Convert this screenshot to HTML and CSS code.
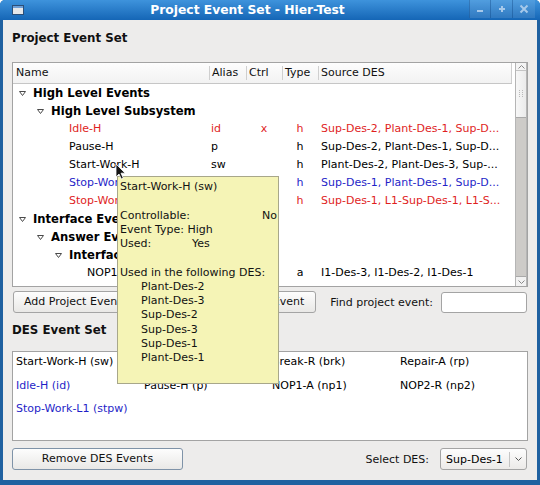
FILE: index.html
```html
<!DOCTYPE html>
<html>
<head>
<meta charset="utf-8">
<title>Project Event Set - Hier-Test</title>
<link rel="stylesheet" href="styles.css">
</head>
<body>
<div class="window">
  <div class="titlebar">
    <div class="tb-icon">
      <svg width="12" height="10" viewBox="0 0 12 10"><rect x="0.5" y="0.5" width="11" height="9" fill="#e6e7e9" stroke="#2c4f78"/><rect x="1" y="1" width="10" height="2" fill="#6f9fd6"/></svg>
    </div>
    <div class="tb-title">Project Event Set - Hier-Test</div>
    <div class="tb-buttons">
      <div class="tb-btn w20"><svg width="8" height="8" viewBox="0 0 8 8"><rect x="1" y="5" width="6" height="2" fill="#a7c9ea"/></svg></div>
      <div class="tb-btn w21"><svg width="8" height="8" viewBox="0 0 8 8"><path d="M3 1h2v2h2v2H5v2H3V5H1V3h2z" fill="#a7c9ea"/></svg></div>
      <div class="tb-btn w23"><svg width="10" height="10" viewBox="0 0 10 10"><path d="M1.5 1.5L8.5 8.5M8.5 1.5L1.5 8.5" stroke="#a7c9ea" stroke-width="2"/></svg></div>
    </div>
  </div>

  <div class="content">
    <div class="section-title">Project Event Set</div>

    <div class="tree-box">
      <div class="tree">
        <div class="tree-header">
          <div class="hcol">Name</div>
          <div class="hcol sep">Alias</div>
          <div class="hcol sep">Ctrl</div>
          <div class="hcol sep">Type</div>
          <div class="hcol sep last">Source DES</div>
        </div>

        <div class="row">
          <div class="name l0"><span class="exp"><svg width="7" height="5" viewBox="0 0 7 5"><path d="M0.5 0.5H6.5L3.5 4.5Z" fill="#fff" stroke="#4a4a4a"/></svg></span><span class="grp">High Level Events</span></div>
        </div>
        <div class="row">
          <div class="name l1"><span class="exp"><svg width="7" height="5" viewBox="0 0 7 5"><path d="M0.5 0.5H6.5L3.5 4.5Z" fill="#fff" stroke="#4a4a4a"/></svg></span><span class="grp">High Level Subsystem</span></div>
        </div>
        <div class="row red">
          <div class="name l2"><span class="exp"></span>Idle-H</div>
          <div class="alias">id</div>
          <div class="ctrl">x</div>
          <div class="type">h</div>
          <div class="src">Sup-Des-2, Plant-Des-1, Sup-D...</div>
        </div>
        <div class="row">
          <div class="name l2"><span class="exp"></span>Pause-H</div>
          <div class="alias">p</div>
          <div class="ctrl"></div>
          <div class="type">h</div>
          <div class="src">Sup-Des-2, Plant-Des-1, Sup-D...</div>
        </div>
        <div class="row">
          <div class="name l2"><span class="exp"></span>Start-Work-H</div>
          <div class="alias">sw</div>
          <div class="ctrl"></div>
          <div class="type">h</div>
          <div class="src">Plant-Des-2, Plant-Des-3, Sup-...</div>
        </div>
        <div class="row blue">
          <div class="name l2"><span class="exp"></span>Stop-Work-H</div>
          <div class="alias"></div>
          <div class="ctrl"></div>
          <div class="type">h</div>
          <div class="src">Sup-Des-1, Plant-Des-1, Sup-D...</div>
        </div>
        <div class="row red">
          <div class="name l2"><span class="exp"></span>Stop-Work-L1</div>
          <div class="alias"></div>
          <div class="ctrl"></div>
          <div class="type">h</div>
          <div class="src">Sup-Des-1, L1-Sup-Des-1, L1-S...</div>
        </div>
        <div class="row">
          <div class="name l0"><span class="exp"><svg width="7" height="5" viewBox="0 0 7 5"><path d="M0.5 0.5H6.5L3.5 4.5Z" fill="#fff" stroke="#4a4a4a"/></svg></span><span class="grp">Interface Events</span></div>
        </div>
        <div class="row">
          <div class="name l1"><span class="exp"><svg width="7" height="5" viewBox="0 0 7 5"><path d="M0.5 0.5H6.5L3.5 4.5Z" fill="#fff" stroke="#4a4a4a"/></svg></span><span class="grp">Answer Events</span></div>
        </div>
        <div class="row">
          <div class="name l2"><span class="exp"><svg width="7" height="5" viewBox="0 0 7 5"><path d="M0.5 0.5H6.5L3.5 4.5Z" fill="#fff" stroke="#4a4a4a"/></svg></span><span class="grp">Interface-1</span></div>
        </div>
        <div class="row">
          <div class="name l3"><span class="exp"></span>NOP1-A</div>
          <div class="alias"></div>
          <div class="ctrl"></div>
          <div class="type">a</div>
          <div class="src">I1-Des-3, I1-Des-2, I1-Des-1</div>
        </div>
      </div>
      <div class="tree-gap"></div>
      <div class="vscroll">
        <div class="sb-up"><svg width="7" height="4" viewBox="0 0 7 4"><path d="M0.5 3.5L3.5 0.5L6.5 3.5" fill="none" stroke="#8a8a8a"/></svg></div>
        <div class="sb-thumb"><svg width="5" height="8" viewBox="0 0 5 8"><g fill="#b9b9b9"><rect x="0" y="0" width="1" height="1"/><rect x="3" y="0" width="1" height="1"/><rect x="0" y="2" width="1" height="1"/><rect x="3" y="2" width="1" height="1"/><rect x="0" y="4" width="1" height="1"/><rect x="3" y="4" width="1" height="1"/><rect x="0" y="6" width="1" height="1"/><rect x="3" y="6" width="1" height="1"/></g></svg></div>
        <div class="sb-track"></div>
        <div class="sb-down"><svg width="7" height="4" viewBox="0 0 7 4"><path d="M0.5 0.5L3.5 3.5L6.5 0.5" fill="none" stroke="#8a8a8a"/></svg></div>
      </div>
    </div>

    <div class="btn-row">
      <div class="btn btn-add">Add Project Events</div>
      <div class="btn btn-rem">Remove Project Event</div>
      <div class="find-label">Find project event:</div>
      <div class="find-input"></div>
    </div>

    <div class="section-title second">DES Event Set</div>

    <div class="des-box">
      <div class="des-item">Start-Work-H (sw)</div>
      <div class="des-item"></div>
      <div class="des-item">Break-R (brk)</div>
      <div class="des-item">Repair-A (rp)</div>
      <div class="des-item blue">Idle-H (id)</div>
      <div class="des-item">Pause-H (p)</div>
      <div class="des-item">NOP1-A (np1)</div>
      <div class="des-item">NOP2-R (np2)</div>
      <div class="des-item blue">Stop-Work-L1 (stpw)</div>
    </div>

    <div class="bottom-row">
      <div class="btn btn-remdes">Remove DES Events</div>
      <div class="sel-label">Select DES:</div>
      <div class="combo">
        <span class="combo-text">Sup-Des-1</span>
        <span class="combo-sep"></span>
        <span class="combo-arrow"><svg width="7" height="4" viewBox="0 0 7 4"><path d="M0.5 0.5L3.5 3.5L6.5 0.5" fill="none" stroke="#555"/></svg></span>
      </div>
    </div>
  </div>

  <div class="tooltip">
    <div class="tt-line">Start-Work-H (sw)</div>
    <div class="tt-line"></div>
    <div class="tt-line"><span class="tt-k1">Controllable:</span>No</div>
    <div class="tt-line">Event Type: High</div>
    <div class="tt-line"><span class="tt-k2">Used:</span>Yes</div>
    <div class="tt-line"></div>
    <div class="tt-line">Used in the following DES:</div>
    <div class="tt-line tt-li">Plant-Des-2</div>
    <div class="tt-line tt-li">Plant-Des-3</div>
    <div class="tt-line tt-li">Sup-Des-2</div>
    <div class="tt-line tt-li">Sup-Des-3</div>
    <div class="tt-line tt-li">Sup-Des-1</div>
    <div class="tt-line tt-li">Plant-Des-1</div>
    <div class="tt-line"></div>
  </div>

  <svg class="cursor" width="12" height="17" viewBox="0 0 12 17"><path d="M1 1V14L4 11L6.3 16L8.3 15.1L6 10.2H10.2Z" fill="#151515" stroke="#ffffff" stroke-width="0.8" stroke-linejoin="round"/></svg>
</div>
</body>
</html>
```

FILE: styles.css
```css
* { box-sizing: border-box; }
html, body { margin: 0; padding: 0; }
body {
  width: 540px;
  height: 485px;
  overflow: hidden;
  background: #ffffff;
  font-family: "DejaVu Sans", "Noto Sans", sans-serif;
  font-size: 11px;
  color: #000;
}
.window {
  position: relative;
  width: 540px;
  height: 485px;
  display: flex;
  flex-direction: column;
  background: #1f61a0;
  border-radius: 5px 5px 0 0;
  overflow: hidden;
}

/* title bar */
.titlebar {
  height: 20px;
  flex: none;
  display: flex;
  align-items: center;
  background: linear-gradient(#3e93dc, #1566b6);
  color: #fff;
}
.tb-icon { width: 12px; height: 10px; margin-left: 12px; display: flex; }
.tb-title {
  flex: 1;
  text-align: center;
  font-weight: bold;
  font-size: 12.3px;
  line-height: 20px;
  padding-left: 2px;
}
.tb-buttons { display: flex; height: 18px; align-self: flex-start; margin-right: 5px; }
.tb-btn {
  height: 18px;
  display: flex;
  align-items: center;
  justify-content: center;
  background: rgba(255,255,255,0.10);
  border-left: 1px solid rgba(10,60,120,0.35);
}
.w20 { width: 21px; }
.w21 { width: 22px; }
.w23 { width: 23px; }

/* content */
.content {
  flex: 1;
  margin: 0 3px 5px 3px;
  background: #edeceb;
  padding: 10px 9px 0 9px;
  display: flex;
  flex-direction: column;
}
.section-title {
  height: 16px;
  line-height: 16px;
  font-weight: bold;
  font-size: 11.8px;
  color: #111;
}
.section-title.second { margin-top: 9px; }

/* tree */
.tree-box {
  margin-top: 16px;
  height: 225px;
  border: 1px solid #a3a3a3;
  background: #fff;
  display: flex;
}
.tree { width: 499px; flex: none; }
.tree-gap { width: 3px; flex: none; }
.tree-header, .row {
  display: grid;
  grid-template-columns: 196px 37px 36px 36px 194px;
}
.tree-header {
  height: 21px;
  background: linear-gradient(#fdfdfd, #f2f2f2);
  border-bottom: 1px solid #c6c6c6;
}
.hcol {
  position: relative;
  line-height: 20px;
  padding-left: 3px;
  color: #111;
}
.hcol.sep::before {
  content: "";
  position: absolute;
  left: 0;
  top: 3px;
  bottom: 3px;
  width: 1px;
  background: #cfcfcf;
}
.hcol.last::after {
  content: "";
  position: absolute;
  right: 0;
  top: 0;
  bottom: 0;
  width: 1px;
  background: #cfcfcf;
}
.row { height: 18px; line-height: 18px; white-space: nowrap; }
.name { display: flex; align-items: center; }
.l0 { padding-left: 6px; }
.l1 { padding-left: 24px; }
.l2 { padding-left: 42px; }
.l3 { padding-left: 60px; }
.exp { width: 7px; height: 5px; margin-right: 7px; display: flex; flex: none; }
.grp { font-weight: bold; font-size: 11.6px; }
.alias { padding-left: 2px; }
.ctrl, .type { text-align: center; }
.src { padding-left: 3px; }
.red { color: #e01e1e; }
.blue { color: #1f1fc8; }

/* scrollbar */
.vscroll {
  width: 12px;
  flex: none;
  display: flex;
  flex-direction: column;
  background: #cdcbc8;
  border-left: 1px solid #b5b5b5;
  border-right: 1px solid #b5b5b5;
}
.sb-up {
  height: 8px;
  display: flex;
  align-items: center;
  justify-content: center;
  background: #f4f4f4;
  border-bottom: 1px solid #c4c4c4;
}
.sb-thumb {
  height: 47px;
  display: flex;
  align-items: center;
  justify-content: center;
  background: linear-gradient(90deg, #f7f7f7, #ebebeb);
  border-bottom: 1px solid #a9a9a9;
}
.sb-track { flex: 1; }
.sb-down {
  height: 10px;
  display: flex;
  align-items: center;
  justify-content: center;
  background: #f2f2f2;
  border-top: 1px solid #a9a9a9;
}

/* buttons */
.btn {
  height: 22px;
  line-height: 20px;
  border: 1px solid #a4a4a4;
  border-radius: 3px;
  background: linear-gradient(#fdfdfd, #e9e8e6);
  white-space: nowrap;
  color: #111;
}
.btn-row {
  margin-top: 4px;
  height: 22px;
  display: flex;
  align-items: center;
}
.btn-add { margin-left: 1px; flex: 1; padding-left: 10px; overflow: hidden; }
.btn-rem { margin-left: 6px; padding: 0 11px; }
.find-label { margin-left: 14px; white-space: nowrap; color: #111; }
.find-input {
  margin-left: 8px;
  margin-right: 1px;
  width: 86px;
  height: 21px;
  background: #fff;
  border: 1px solid #a4a4a4;
  border-radius: 3px;
}

/* DES list */
.des-box {
  margin-top: 13px;
  height: 90px;
  border: 1px solid #a3a3a3;
  background: #fff;
  display: grid;
  grid-template-columns: repeat(4, 128px);
  grid-auto-rows: 20px;
  row-gap: 3.5px;
  padding: 0 3px;
  align-content: start;
}
.des-item { line-height: 20px; white-space: nowrap; }

/* bottom row */
.bottom-row {
  margin-top: 7px;
  height: 22px;
  display: flex;
  align-items: center;
}
.btn-remdes {
  width: 171px;
  text-align: center;
  border-color: #7f93a8;
}
.sel-label { margin-left: auto; margin-right: 11px; color: #111; }
.combo {
  width: 87px;
  height: 22px;
  margin-right: 1px;
  display: flex;
  align-items: center;
  border: 1px solid #a4a4a4;
  border-radius: 3px;
  background: linear-gradient(#fdfdfd, #eceae8);
}
.combo-text { flex: 1; padding-left: 5px; }
.combo-sep { width: 1px; height: 15px; background: #c4c4c4; }
.combo-arrow { width: 16px; display: flex; justify-content: center; }

/* tooltip */
.tooltip {
  position: absolute;
  left: 117px;
  top: 176px;
  width: 162px;
  background: #f5f4b6;
  border: 1px solid #a8a78a;
  padding: 3px 2px;
  line-height: 14.25px;
  color: #111;
}
.tt-line { height: 14.25px; white-space: nowrap; }
.tt-k1 { display: inline-block; width: 142px; }
.tt-k2 { display: inline-block; width: 72px; }
.tt-li { padding-left: 21px; }

.cursor {
  position: absolute;
  left: 115px;
  top: 163px;
}
```
